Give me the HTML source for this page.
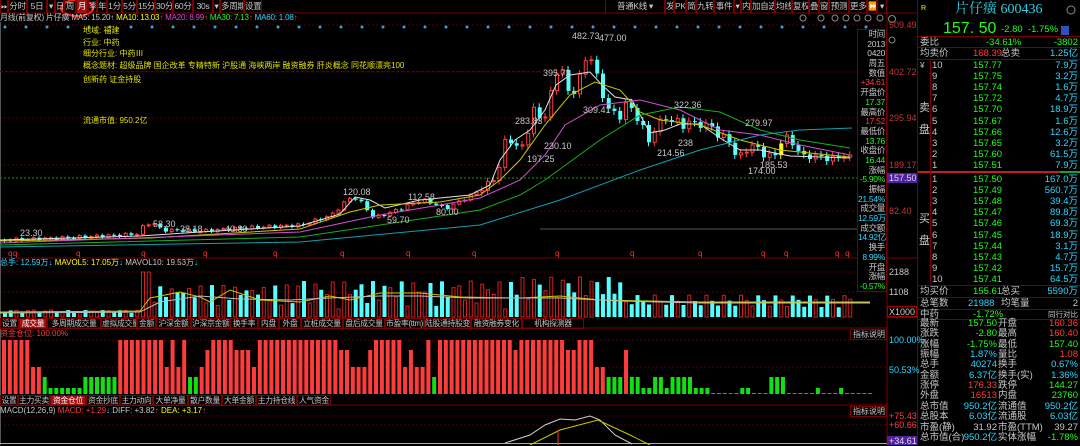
<!DOCTYPE html>
<html><head><meta charset="utf-8">
<style>
*{margin:0;padding:0;box-sizing:border-box}
body{width:1080px;height:445px;background:#000;overflow:hidden;position:relative;font-family:"Liberation Sans","Noto Sans CJK SC",sans-serif;font-size:9px;color:#c8c8c8}
.a{position:absolute;white-space:nowrap;line-height:10px}
.tb{position:absolute;top:0;height:13px;border-right:1px solid #7a0000;border-left:1px solid #7a0000;line-height:12px;text-align:center;color:#c8c8c8;font-size:8.5px;white-space:nowrap;overflow:hidden;letter-spacing:-0.3px}
.tab{position:absolute;height:11px;line-height:9px;border:1px solid #7a0000;text-align:center;font-size:7.8px;color:#c8c8c8;white-space:nowrap;overflow:hidden;letter-spacing:-0.3px}
.sel{background:#a01010;color:#fff}
.rp{position:absolute;left:918px;width:162px;font-size:9.5px}
.r{position:absolute;height:11px;line-height:11px;width:162px;left:0;white-space:nowrap}
.r span{position:absolute}
.g{color:#1eff1e}.rd{color:#ff3c3c}.c{color:#2cd8ff}.w{color:#c8c8c8}.y{color:#ffff00}
.ib div{height:9.7px;line-height:9.7px;text-align:right;font-size:8.5px;white-space:nowrap;letter-spacing:-0.3px}
</style></head><body>

<svg id="sv" width="1080" height="445" style="position:absolute;left:0;top:0">
<g stroke="#500000" stroke-dasharray="2,2">
<line x1="0" y1="25" x2="887" y2="25"/><line x1="0" y1="72" x2="887" y2="72"/><line x1="0" y1="118" x2="887" y2="118"/><line x1="0" y1="165" x2="887" y2="165"/><line x1="0" y1="211" x2="887" y2="211"/>
<line x1="0" y1="272" x2="887" y2="272"/><line x1="0" y1="292" x2="887" y2="292"/>
<line x1="0" y1="340" x2="887" y2="340"/><line x1="0" y1="367" x2="887" y2="367"/>
<line x1="0" y1="416" x2="887" y2="416"/><line x1="0" y1="425" x2="887" y2="425"/>
</g>
<line x1="0" y1="178" x2="887" y2="178" stroke="#1a9a1a" stroke-dasharray="2,2"/>
<line x1="540" y1="229" x2="887" y2="229" stroke="#555"/>
<line x1="0" y1="13" x2="918" y2="13" stroke="#7a0000"/>
<line x1="0" y1="258" x2="887" y2="258" stroke="#7a0000"/>
<line x1="0" y1="328" x2="887" y2="328" stroke="#7a0000"/>
<line x1="0" y1="405" x2="887" y2="405" stroke="#7a0000"/>
<line x1="887" y1="13" x2="887" y2="445" stroke="#7a0000"/>
<line x1="917.5" y1="0" x2="917.5" y2="445" stroke="#7a0000"/>
<line x1="887" y1="317.5" x2="917" y2="317.5" stroke="#7a0000"/>
<line x1="887" y1="258" x2="917" y2="258" stroke="#7a0000"/>
<line x1="0.5" y1="22" x2="0.5" y2="445" stroke="#555"/>
<line x1="0" y1="443.5" x2="887" y2="443.5" stroke="#aaa"/>
<g id="dyn"></g>
<g fill="none" stroke-width="1">
<polyline stroke="#e0e0e0" points="0,240 140,236 200,232 300,226 340,214 355,197 370,200 385,208 420,200 470,195 490,185 500,160 515,140 530,130 545,110 556,85 570,75 590,72 602,85 615,97 632,100 650,133 665,130 680,124 700,124 720,138 740,150 760,150 790,156 850,158"/>
<polyline stroke="#c8c800" points="0,241 150,238 300,229 350,212 380,205 440,202 480,195 500,180 520,160 545,125 570,95 595,82 620,90 640,112 660,120 700,125 740,140 780,150 850,157"/>
<polyline stroke="#d050d0" points="0,243 300,232 380,215 440,205 480,198 520,180 545,155 565,125 600,105 640,100 680,110 720,130 760,135 800,145 850,155"/>
<polyline stroke="#18b018" points="0,245 300,237 400,222 480,210 520,195 545,180 600,140 640,115 680,107 720,112 760,130 800,140 850,148"/>
<polyline stroke="#10a0b0" points="0,247 300,242 480,225 560,200 640,170 700,150 760,135 800,130 852,128"/>
</g>
<g fill="none" stroke-width="1">
<polyline stroke="#d0d0d0" points="505,443 530,435 545,425 560,419 575,420 590,416 600,420 615,435 632,444"/>
<polyline stroke="#c8c800" points="530,445 560,430 598,420 630,435 650,445"/>
</g>
<line x1="558" y1="430" x2="558" y2="445" stroke="#ff3030"/>
<ellipse cx="77" cy="8" rx="16" ry="8" fill="none" stroke="#ff2020" stroke-width="2"/>
<rect x="887" y="173" width="30" height="10" fill="#5020a0"/>
<rect x="887" y="436" width="30" height="9" fill="#5020a0"/>
<rect x="887.5" y="306.5" width="29" height="10" fill="none" stroke="#a00000"/>
<rect x="850.5" y="329.5" width="36" height="10" fill="none" stroke="#7a0000"/>
<rect x="850.5" y="406.5" width="36" height="10" fill="none" stroke="#7a0000"/>
<rect x="857.5" y="29.5" width="29" height="262" fill="#000" stroke="#7a0000"/>
<line x1="918" y1="172" x2="1060" y2="172" stroke="#c02020" stroke-width="2"/>
<line x1="1060" y1="172" x2="1080" y2="172" stroke="#20a020" stroke-width="2"/>
<g stroke="#7a0000" fill="none">
<line x1="918" y1="36.5" x2="1080" y2="36.5"/><line x1="918" y1="47.5" x2="1080" y2="47.5"/><line x1="918" y1="59.5" x2="1080" y2="59.5"/>
<line x1="930.5" y1="59" x2="930.5" y2="284"/>
<line x1="918" y1="285.5" x2="1080" y2="285.5"/><line x1="918" y1="297.5" x2="1080" y2="297.5"/><line x1="918" y1="309.5" x2="1080" y2="309.5"/><line x1="918" y1="319.5" x2="1080" y2="319.5"/>
</g>
<g fill="none" stroke="#888"><circle cx="803" cy="18" r="3"/><circle cx="821" cy="18" r="3"/><circle cx="835" cy="18" r="3"/><circle cx="846" cy="18" r="3"/><circle cx="857" cy="18" r="3"/><circle cx="868" cy="18" r="3"/><circle cx="880" cy="18" r="3"/><circle cx="892" cy="19" r="3.5"/><circle cx="892" cy="40" r="3"/><circle cx="1071" cy="10" r="4"/></g>
</svg>

<!-- toolbar -->
<div class="tb" style="left:0;width:8px">⏭</div>
<div class="tb" style="left:8px;width:19px">分时</div>
<div class="tb" style="left:27px;width:20px">5日</div>
<div class="tb" style="left:47px;width:8px">▾</div>
<div class="tb" style="left:55px;width:9px">日</div>
<div class="tb" style="left:64px;width:12px">周</div>
<div class="tb sel" style="left:76px;width:12px">月</div>
<div class="tb" style="left:88px;width:9px">季</div>
<div class="tb" style="left:97px;width:10px">年</div>
<div class="tb" style="left:107px;width:15px">1分</div>
<div class="tb" style="left:122px;width:15px">5分</div>
<div class="tb" style="left:137px;width:18px">15分</div>
<div class="tb" style="left:155px;width:18px">30分</div>
<div class="tb" style="left:173px;width:20px">60分</div>
<div class="tb" style="left:193px;width:20px">30s</div>
<div class="tb" style="left:213px;width:7px">▾</div>
<div class="tb" style="left:220px;width:24px">多周期</div>
<div class="tb" style="left:244px;width:18px">设置</div>

<div class="tb" style="left:605px;width:60px">普通K线 ▾</div>
<div class="tb" style="left:665px;width:9px">发</div>
<div class="tb" style="left:674px;width:12px">PK</div>
<div class="tb" style="left:686px;width:10px">简</div>
<div class="tb" style="left:696px;width:18px">九转</div>
<div class="tb" style="left:714px;width:20px">事件</div>
<div class="tb" style="left:734px;width:7px">▾</div>
<div class="tb" style="left:741px;width:10px">内</div>
<div class="tb" style="left:751px;width:24px">加自选</div>
<div class="tb" style="left:775px;width:17px">均线</div>
<div class="tb" style="left:792px;width:17px">复权</div>
<div class="tb" style="left:809px;width:10px">叠</div>
<div class="tb" style="left:819px;width:10px">窗</div>
<div class="tb" style="left:829px;width:20px">预测</div>
<div class="tb" style="left:849px;width:18px">更多</div>
<div class="tb" style="left:867px;width:10px">⏩</div>
<div class="tb" style="left:877px;width:10px">▾</div>

<div class="a" style="left:0;top:13px;font-size:8px;letter-spacing:-0.2px">月线(前复权) 片仔癀 MA5: 15.20↑ <span class="y">MA10: 13.03</span><span class="rd">↑</span> <span style="color:#e040e0">MA20: 8.99</span><span class="rd">↑</span> <span class="g">MA30: 7.13</span><span class="rd">↑</span> <span class="c">MA60: 1.08</span><span class="rd">↑</span></div>

<div class="a" style="left:83px;top:25px;color:#e0e000;font-size:8px;line-height:11.6px">地域: 福建<br>行业: 中药<br>细分行业: 中药Ⅲ<br>概念题材: 超级品牌 国企改革 专精特新 沪股通 海峡两岸 融资融券 肝炎概念 同花顺漂亮100</div>
<div style="position:absolute;left:0;top:71px;width:540px;border-top:1px dashed #600000"></div>
<div class="a" style="left:83px;top:75px;color:#e0e000;font-size:8px">创新药 证金持股</div>
<div class="a" style="left:83px;top:116px;color:#e0e000;font-size:8px">流通市值: 950.2亿</div>

<!-- price labels -->
<div class="a" style="left:20px;top:228px">23.30</div>
<div class="a" style="left:153px;top:219px">53.30</div>
<div class="a" style="left:180px;top:224px">38.18</div>
<div class="a" style="left:225px;top:224px">40.80</div>
<div class="a" style="left:343px;top:187px">120.08</div>
<div class="a" style="left:387px;top:215px">59.70</div>
<div class="a" style="left:408px;top:192px">112.58</div>
<div class="a" style="left:436px;top:207px">80.00</div>
<div class="a" style="left:515px;top:116px">283.83</div>
<div class="a" style="left:527px;top:154px">197.25</div>
<div class="a" style="left:544px;top:141px">230.10</div>
<div class="a" style="left:543px;top:68px">395.72</div>
<div class="a" style="left:572px;top:31px">482.73</div>
<div class="a" style="left:599px;top:33px">477.00</div>
<div class="a" style="left:583px;top:105px">309.41</div>
<div class="a" style="left:674px;top:100px">322.36</div>
<div class="a" style="left:657px;top:148px">214.56</div>
<div class="a" style="left:745px;top:118px">279.97</div>
<div class="a" style="left:760px;top:160px">185.53</div>
<div class="a" style="left:748px;top:166px">174.00</div>
<div class="a" style="left:678px;top:138px">238</div>

<!-- axis -->
<div class="a" style="left:889px;top:20px;color:#c83232">509.49</div>
<div class="a" style="left:889px;top:67px;color:#c83232">402.72</div>
<div class="a" style="left:889px;top:113px;color:#c83232">295.94</div>
<div class="a" style="left:889px;top:160px;color:#c83232">189.17</div>
<div class="a" style="left:889px;top:173px;color:#ddd">157.50</div>
<div class="a" style="left:889px;top:206px;color:#c83232">82.40</div>
<div class="a" style="left:889px;top:267px">2188</div>
<div class="a" style="left:889px;top:287px">1108</div>
<div class="a" style="left:889px;top:307px">X1000</div>
<div class="a c" style="left:889px;top:335px">100.00%</div>
<div class="a c" style="left:889px;top:365px">50.53%</div>
<div class="a rd" style="left:889px;top:411px">+75.43</div>
<div class="a rd" style="left:889px;top:420px">+60.66</div>
<div class="a" style="left:889px;top:436px;color:#ddd">+34.61</div>
<div class="a" style="left:853px;top:330px;font-size:8px">指标说明</div>
<div class="a" style="left:853px;top:407px;font-size:8px">指标说明</div>

<!-- info box -->
<div class="ib" style="position:absolute;left:858px;top:30px;width:27px">
<div>时间</div><div>2013</div><div>0420</div><div>周五</div><div>数值</div><div class="rd">+34.61</div><div>开盘价</div><div class="g">17.37</div><div>最高价</div><div class="rd">17.52</div><div>最低价</div><div class="g">13.76</div><div>收盘价</div><div class="g">16.44</div><div>涨幅</div><div class="g">-5.90%</div><div>振幅</div><div class="c">21.54%</div><div>成交量</div><div class="c">12.59万</div><div>成交额</div><div class="c">14.92亿</div><div>换手</div><div class="c">8.99%</div><div>开盘</div><div>涨幅</div><div class="g">-0.57%</div>
</div>

<div class="a" style="left:0;top:258px;font-size:8px"><span class="c">总手: 12.59万</span><span class="c">↓</span> <span class="y">MAVOL5: 17.05万</span><span class="c">↓</span> MAVOL10: 19.53万<span class="c">↓</span></div>

<!-- tabs 1 -->
<div class="tab" style="left:0;top:318px;width:19px">设置</div>
<div class="tab sel" style="left:19px;top:318px;width:28px">成交量</div>
<div class="tab" style="left:47px;top:318px;width:54px">多周期成交量</div>
<div class="tab" style="left:101px;top:318px;width:36px">虚拟成交量</div>
<div class="tab" style="left:137px;top:318px;width:19px">金额</div>
<div class="tab" style="left:156px;top:318px;width:35px">沪深金额</div>
<div class="tab" style="left:191px;top:318px;width:39px">沪深京金额</div>
<div class="tab" style="left:230px;top:318px;width:28px">换手率</div>
<div class="tab" style="left:258px;top:318px;width:21px">内盘</div>
<div class="tab" style="left:279px;top:318px;width:22px">外盘</div>
<div class="tab" style="left:301px;top:318px;width:42px">立桩成交量</div>
<div class="tab" style="left:343px;top:318px;width:42px">盘后成交量</div>
<div class="tab" style="left:385px;top:318px;width:39px">市盈率(ttm)</div>
<div class="tab" style="left:424px;top:318px;width:47px">陆股通持股变化</div>
<div class="tab" style="left:471px;top:318px;width:51px">融资融券变化</div>
<div class="tab" style="left:522px;top:318px;width:62px">机构探测器</div>
<div class="a rd" style="left:0;top:329px;font-size:8px">资金仓位: 100.00%</div>

<!-- tabs 2 -->
<div class="tab" style="left:0;top:395px;width:18px">设置</div>
<div class="tab" style="left:18px;top:395px;width:32px">主力买卖</div>
<div class="tab sel" style="left:50px;top:395px;width:36px">资金仓位</div>
<div class="tab" style="left:86px;top:395px;width:34px">资金抄底</div>
<div class="tab" style="left:120px;top:395px;width:33px">主力动向</div>
<div class="tab" style="left:153px;top:395px;width:35px">大单净量</div>
<div class="tab" style="left:188px;top:395px;width:34px">散户数量</div>
<div class="tab" style="left:222px;top:395px;width:34px">大单金额</div>
<div class="tab" style="left:256px;top:395px;width:41px">主力持仓线</div>
<div class="tab" style="left:297px;top:395px;width:34px">人气资金</div>
<div class="a" style="left:0;top:406px;font-size:8px">MACD(12,26,9) <span class="rd">MACD: +1.29</span><span class="c">↓</span> DIFF: +3.82<span class="rd">↑</span> <span class="y">DEA: +3.17</span><span class="rd">↑</span></div>

<!-- right panel -->
<div class="a y" style="left:921px;top:4px;font-size:7px">R</div>
<div class="a" style="left:955px;top:2px;font-size:14px;line-height:16px;color:#2ccfe8;font-family:'Liberation Serif','Noto Serif CJK SC',serif">片仔癀 600436</div>
<div class="a g" style="left:943px;top:20px;font-size:16px;line-height:18px">157. 50</div>
<div class="a g" style="left:1001px;top:25px;font-size:9.5px">-2.80 &nbsp;-1.75%</div>
<div style="position:absolute;left:1061px;top:26px;width:8px;height:9px;background:#3050c0"></div>
<div class="rp" style="top:0;height:445px">
<div class="r" style="top:37px"><span class="w" style="left:2px">委比</span><span class="g" style="left:68px">-34.61%</span><span class="g" style="right:2px">-3802</span></div>
<div class="r" style="top:48px"><span class="w" style="left:2px">均卖价</span><span class="rd" style="left:55px">168.39</span><span class="w" style="left:83px">总卖</span><span class="c" style="right:2px">1.25亿</span></div>
<div class="w" style="position:absolute;left:2px;top:61px;font-size:8px">¥</div>
<div class="w" style="position:absolute;left:1px;top:97px;font-size:11px;line-height:22px">卖<br>盘</div>
<div class="w" style="position:absolute;left:1px;top:208px;font-size:11px;line-height:22px">买<br>盘</div>
<div id="ob"></div>
<div class="r" style="top:286px"><span class="w" style="left:2px">均买价</span><span class="g" style="left:55px">155.61</span><span class="w" style="left:83px">总买</span><span class="c" style="right:2px">5590万</span></div>
<div class="r" style="top:298px"><span class="w" style="left:2px">总笔数</span><span class="c" style="left:50px">21988</span><span class="w" style="left:83px">均笔量</span><span class="w" style="right:2px">2</span></div>
<div class="r" style="top:309px"><span class="w" style="left:2px">中药</span><span class="g" style="left:55px">-1.72%</span><span class="w" style="right:2px;font-size:7.5px">同行对比</span></div>
<div id="st"></div>
</div>

<script>
(function(){
var g=document.getElementById("dyn"),h="";
for(var x=5;x<880;x+=11+(x%3)*5){h+='<circle cx="'+x+'" cy="27" r="1.5" fill="#2aa8d8"/>';}
[10,15,78,143,205,275,342,408,474,557,632,700,763,786,837,847].forEach(function(x){h+='<text x="'+(x-2)+'" y="256" fill="#ff3030" font-size="8" font-family="Liberation Sans">q</text>';});
var K=[[3,240],[60,238],[100,236],[135,234],[142,226],[150,222],[160,230],[200,231],[240,228],[300,225],[330,215],[345,200],[352,197],[360,203],[372,218],[390,212],[420,200],[445,208],[470,195],[490,182],[498,166],[503,142],[510,140],[518,152],[525,135],[532,110],[542,122],[547,100],[553,83],[558,55],[564,88],[569,98],[575,85],[580,70],[586,56],[592,58],[598,92],[603,100],[609,112],[615,115],[620,118],[626,96],[632,118],[637,118],[643,131],[649,148],[655,118],[660,124],[666,116],[672,124],[677,120],[683,128],[689,120],[695,125],[701,125],[706,126],[712,126],[717,138],[723,137],[729,142],[735,160],[740,154],[746,148],[752,146],[757,148],[763,156],[769,156],[774,154],[781,138],[786,138],[792,144],[797,152],[803,157],[808,156],[814,157],[820,156],[826,159],[831,159],[837,156],[842,156],[848,158]];
function Y(x){for(var i=1;i<K.length;i++){if(x<=K[i][0]){var a=K[i-1],b=K[i];return a[1]+(b[1]-a[1])*(x-a[0])/(b[0]-a[0]);}}return 158;}
var prev=240,sp=5.75,idx=0,ups=[];
for(var x=3;x<=850;x+=sp){
 var c=Y(x)+Math.sin(idx*2.3)*(x<480?1.5:3);
 var o=prev,up=c<o;var t=Math.min(o,c),bh=Math.max(Math.abs(o-c),1);
 var wk=x<480?1.5:4;
 var col=up?"#ff3c3c":"#54ffff";
 if(x>778&&x<783){col="#ffff00";}
 h+='<line x1="'+(x+1.5)+'" y1="'+(t-wk)+'" x2="'+(x+1.5)+'" y2="'+(t+bh+wk)+'" stroke="'+col+'"/>';
 if(up&&col!="#ffff00")h+='<rect x="'+(x+0.5)+'" y="'+t+'" width="3" height="'+bh+'" fill="#000" stroke="'+col+'"/>';
 else h+='<rect x="'+x+'" y="'+t+'" width="4" height="'+bh+'" fill="'+col+'"/>';
 ups.push(up);prev=c;idx++;
}
for(var i=0;i<ups.length;i++){
 var x=3+i*sp,v;
 if(x<140)v=4+Math.abs(Math.sin(i))*3;else if(x<300)v=10+Math.abs(Math.sin(i*1.7))*22;else if(x<520)v=8+Math.abs(Math.sin(i*1.3))*28;else if(x<620)v=15+Math.abs(Math.sin(i*1.9))*25;else v=6+Math.abs(Math.sin(i*2.1))*16;
 if(x>140&&x<152)v=45;
 var y=317-v;
 if(ups[i])h+='<rect x="'+(x+0.5)+'" y="'+y+'" width="3" height="'+v+'" fill="none" stroke="#d02020"/>';
 else h+='<rect x="'+x+'" y="'+y+'" width="4" height="'+v+'" fill="#54ffff"/>';
}
h+='<polyline fill="none" stroke="#c8c800" points="0,312 140,311 150,298 180,292 200,297 210,302 230,290 260,300 300,302 330,296 350,300 380,293 420,293 460,297 520,298 560,296 600,300 700,302 870,302"/>';
h+='<polyline fill="none" stroke="#bbb" points="0,313 140,312 160,302 200,296 240,299 290,300 330,298 380,296 420,296 470,298 560,298 620,301 700,303 870,303"/>';
var s="FFFFFMMGggggggGGGGGGFFFFFFFFMFMFGGMHFFFFHHHMFFFFFFFFFFFFFFHHMMMHFFFFFMHMMFGFFFFFFFFFFFFFHFFFFFFFFHHFFFMMGGGHGGggGGgGGGGggg-----gg---GGG-----g---g-----";
var tops={F:340,M:367,H:350,G:377,g:388,"-":393};var fs=872/s.length;
for(var i=0;i<s.length;i++){var ch=s[i],x=2+i*fs,t=tops[ch];
 var col=(ch=="F"||ch=="M"||ch=="H")?"#ff3c3c":"#10e010";
 if(ch=="-")h+='<line x1="'+x+'" y1="393.5" x2="'+(x+4)+'" y2="393.5" stroke="#10c010"/>';
 else h+='<rect x="'+x+'" y="'+t+'" width="4" height="'+(394-t)+'" fill="'+col+'"/>';}
g.innerHTML=h;
var sell=[["10","157.77","7.9万"],["9","157.75","3.2万"],["8","157.74","1.6万"],["7","157.72","4.7万"],["6","157.70","18.9万"],["5","157.67","1.6万"],["4","157.66","12.6万"],["3","157.65","3.2万"],["2","157.60","61.5万"],["1","157.51","7.9万"]];
var buy=[["1","157.50","167.0万"],["2","157.49","560.7万"],["3","157.48","39.4万"],["4","157.47","89.8万"],["5","157.46","69.3万"],["6","157.45","18.9万"],["7","157.44","3.1万"],["8","157.43","4.7万"],["9","157.42","15.7万"],["10","157.41","64.5万"]];
var o="";
sell.forEach(function(r,i){o+='<div class="r" style="top:'+(60+i*11.1)+'px"><span class="w" style="left:14px">'+r[0]+'</span><span class="g" style="left:55px">'+r[1]+'</span><span class="c" style="right:2px">'+r[2]+'</span></div>';});
buy.forEach(function(r,i){o+='<div class="r" style="top:'+(174+i*11.1)+'px"><span class="w" style="left:14px">'+r[0]+'</span><span class="g" style="left:55px">'+r[1]+'</span><span class="c" style="right:2px">'+r[2]+'</span></div>';});
document.getElementById("ob").innerHTML=o;
var st=[["最新","g","157.50","开盘","rd","160.36"],["涨跌","g","-2.80","最高","rd","160.40"],["涨幅","g","-1.75%","最低","g","157.40"],["振幅","c","1.87%","量比","rd","1.08"],["总手","c","40274","换手","c","0.67%"],["金额","c","6.37亿","换手(实)","c","1.36%"],["涨停","rd","176.33","跌停","g","144.27"],["外盘","rd","16513","内盘","g","23760"],["总市值","c","950.2亿","流通值","c","950.2亿"],["总股本","c","6.03亿","流通股","c","6.03亿"],["市盈(静)","w","31.92","市盈(TTM)","w","39.27"],["总市值(合)","c","950.2亿","实体涨幅","g","-1.78%"]];
o="";
st.forEach(function(r,i){o+='<div class="r" style="top:'+(319+i*10.35)+'px;line-height:10px"><span class="w" style="left:2px">'+r[0]+'</span><span class="'+r[1]+'" style="right:83px">'+r[2]+'</span><span class="w" style="left:80px">'+r[3]+'</span><span class="'+r[4]+'" style="right:2px">'+r[5]+'</span></div>';});
document.getElementById("st").innerHTML=o;
})();
</script>
</body></html>
